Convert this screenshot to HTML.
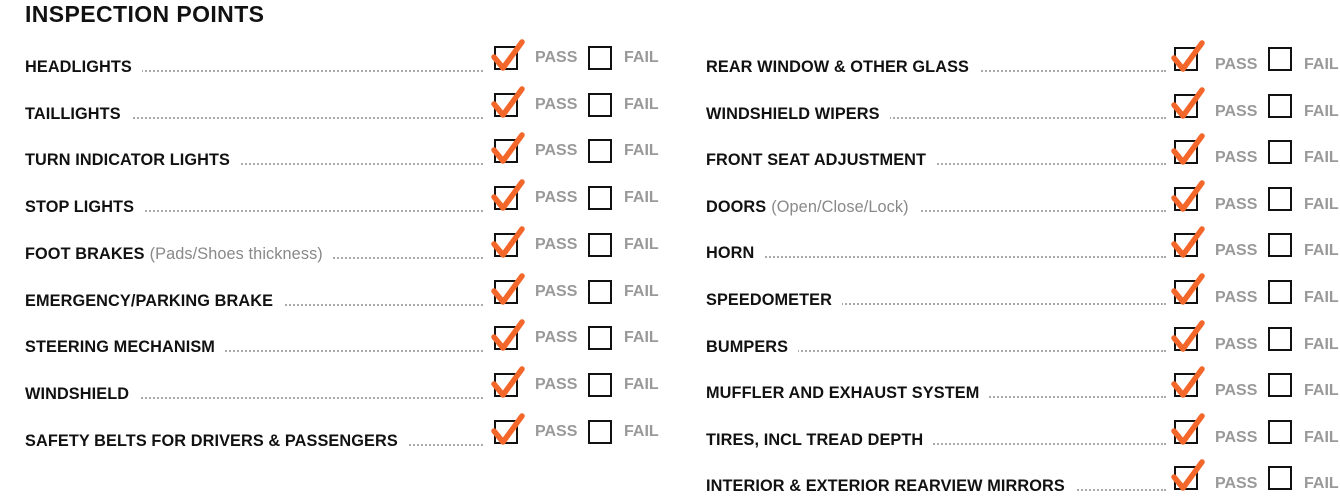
<!DOCTYPE html>
<html><head><meta charset="utf-8"><style>
body{margin:0;width:1340px;height:499px;background:#fff;position:relative;overflow:hidden;font-family:"Liberation Sans",sans-serif}
h1{position:absolute;left:25px;top:1px;margin:0;font-size:23px;font-weight:bold;color:#111;letter-spacing:0.4px}
.row{position:absolute;height:30px}
.lab{position:absolute;left:0;bottom:0;font-size:16.3px;font-weight:bold;color:#111;white-space:nowrap;background:#fff;padding-right:10px;line-height:18px;letter-spacing:0.1px}
.lab i{font-style:normal;font-weight:normal;color:#888;margin-left:5px}
.dots{position:absolute;left:0;bottom:4px;border-bottom:2px dotted #aaa}
.box{position:absolute;width:20px;height:20px;border:2.5px solid #111}
.t{position:absolute;font-size:16px;font-weight:bold;color:#999;line-height:18px}
svg{position:absolute}
</style></head><body>
<h1>INSPECTION POINTS</h1>
<div id="c"></div>
<script>
const L=["HEADLIGHTS","TAILLIGHTS","TURN INDICATOR LIGHTS","STOP LIGHTS","FOOT BRAKES<i>(Pads/Shoes thickness)</i>","EMERGENCY/PARKING BRAKE","STEERING MECHANISM","WINDSHIELD","SAFETY BELTS FOR DRIVERS &amp; PASSENGERS"];
const R=["REAR WINDOW &amp; OTHER GLASS","WINDSHIELD WIPERS","FRONT SEAT ADJUSTMENT","DOORS<i>(Open/Close/Lock)</i>","HORN","SPEEDOMETER","BUMPERS","MUFFLER AND EXHAUST SYSTEM","TIRES, INCL TREAD DEPTH","INTERIOR &amp; EXTERIOR REARVIEW MIRRORS"];
let h="";
function row(x,y,w,txt,bx,by,ty){
 h+=`<div class="row" style="left:${x}px;top:${y-15}px;width:${w}px"><div class="dots" style="width:${w}px"></div><div class="lab">${txt}</div></div>`;
 h+=`<div class="box" style="left:${bx}px;top:${by}px"></div>`;
 h+=`<svg style="left:${bx-3}px;top:${by-7}px" width="36" height="36"><path d="M3 18 L12 29 L31 3" fill="none" stroke="#f4672a" stroke-width="5.5" stroke-linecap="round" stroke-linejoin="round"/></svg>`;
 h+=`<div class="t" style="left:${bx+41}px;top:${ty}px">PASS</div>`;
 h+=`<div class="box" style="left:${bx+94}px;top:${by}px"></div>`;
 h+=`<div class="t" style="left:${bx+130}px;top:${ty}px">FAIL</div>`;
}
L.forEach((t,i)=>{const y=65+i*46.7;row(25,y-4,458,t,494,46+i*46.7,49+i*46.7)});
R.forEach((t,i)=>{const y=65+i*46.6;row(706,y-4,460,t,1174,47+i*46.6,56+i*46.6)});
document.getElementById("c").innerHTML=h;
</script>
</body></html>
